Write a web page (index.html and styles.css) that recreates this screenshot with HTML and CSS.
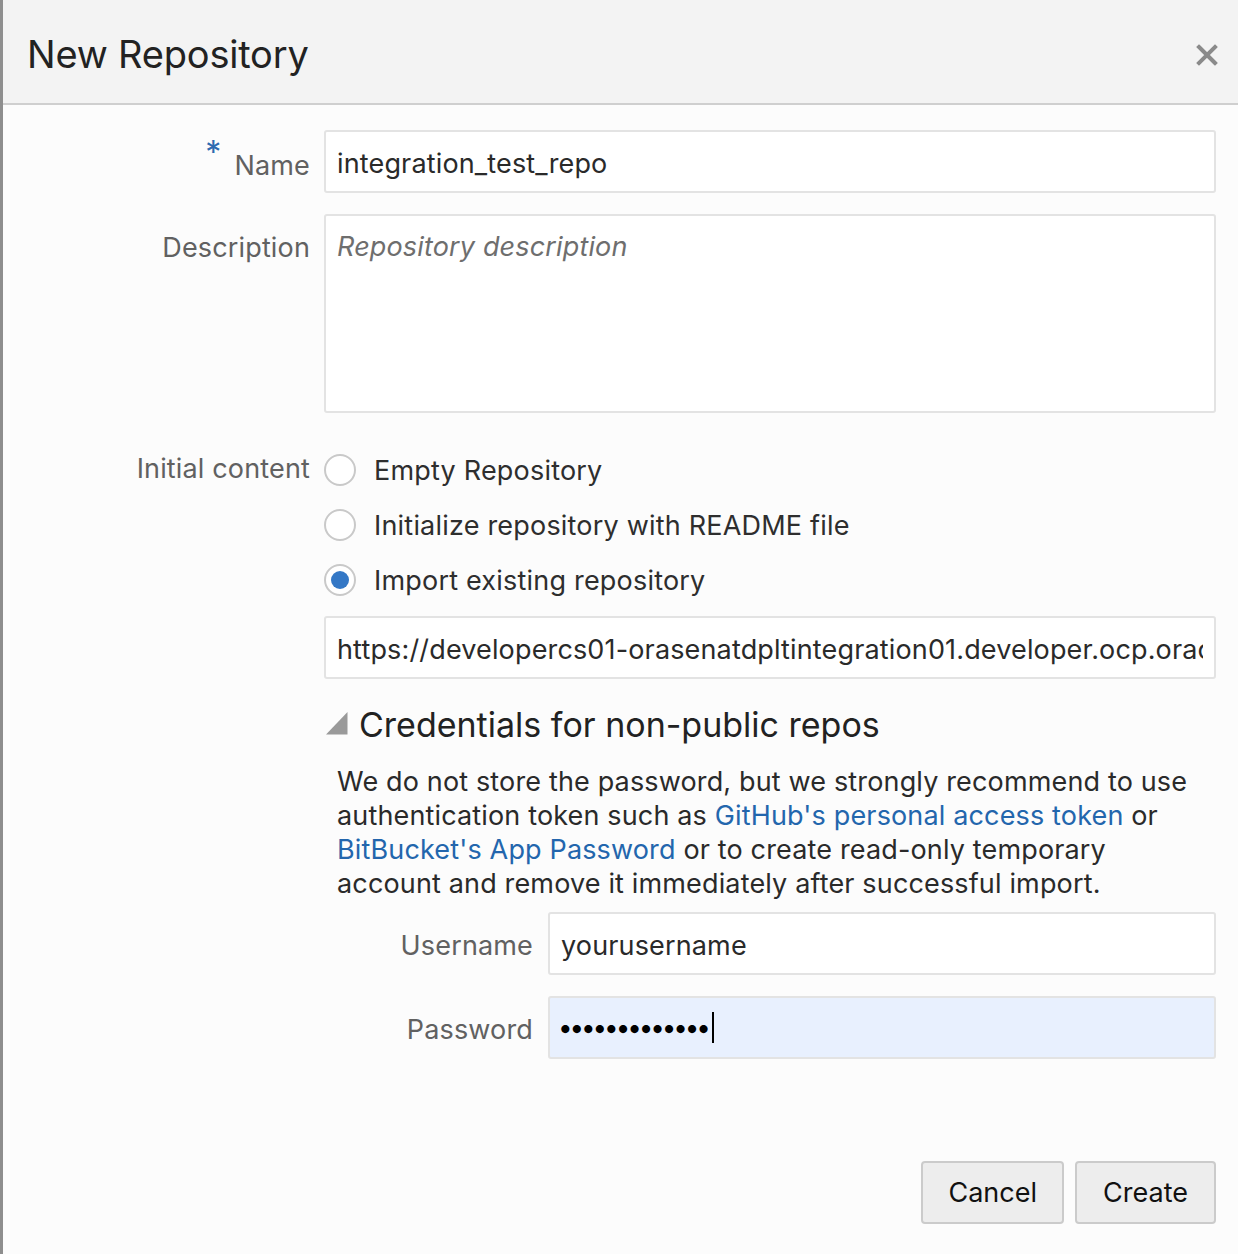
FILE: index.html
```html
<!DOCTYPE html>
<html>
<head>
<meta charset="utf-8">
<title>New Repository</title>
<link rel="stylesheet" href="styles.css">
</head>
<body>
<div class="dialog">
  <div class="header">
    <h1 class="title">New Repository</h1>
    <button class="close" aria-label="Close">
      <svg width="22" height="22" viewBox="0 0 22 22"><path d="M3 3L19 19M19 3L3 19" stroke="#8a8a8a" stroke-width="4" stroke-linecap="square"/></svg>
    </button>
  </div>
  <div class="body">
    <div class="form">
      <label class="label label-input"><span class="req">*</span>Name</label>
      <input class="field" type="text" value="integration_test_repo">

      <label class="label label-area">Description</label>
      <textarea class="field area" placeholder="Repository description"></textarea>

      <label class="label label-radio">Initial content</label>
      <div class="content">
        <div class="radios">
          <div class="radio-row"><span class="radio"></span><span class="radio-text">Empty Repository</span></div>
          <div class="radio-row"><span class="radio"></span><span class="radio-text">Initialize repository with README file</span></div>
          <div class="radio-row"><span class="radio checked"></span><span class="radio-text">Import existing repository</span></div>
        </div>
        <input class="field url" type="text" value="https://developercs01-orasenatdpltintegration01.developer.ocp.oraclecloud.com/">
        <div class="cred-head">
          <svg class="tri" width="22" height="23" viewBox="0 0 22 23"><path d="M0 22.5H21.5V0Z" fill="#9a9a9a"/></svg>
          <span>Credentials for non-public repos</span>
        </div>
        <p class="note">We do not store the password, but we strongly recommend to use authentication token such as <a href="#">GitHub's personal access token</a> or <a href="#">BitBucket's App Password</a> or to create read-only temporary account and remove it immediately after successful import.</p>
        <div class="cred-form">
          <label class="label label-input">Username</label>
          <input class="field" type="text" value="yourusername">
          <label class="label label-input">Password</label>
          <div class="field pwd"><span class="dots">•••••••••••••</span><span class="caret"></span></div>
        </div>
      </div>
    </div>
    <div class="footer">
      <button class="btn">Cancel</button>
      <button class="btn">Create</button>
    </div>
  </div>
</div>
</body>
</html>
```
FILE: styles.css
```css
html, body {
  margin: 0;
  padding: 0;
  background: #8e8e8e;
}
body {
  font-family: Inter, "Noto Sans", "Liberation Sans", sans-serif;
  width: 1238px;
  height: 1254px;
  overflow: hidden;
}
.dialog {
  margin-left: 3px;
  width: 1235px;
  height: 1254px;
  background: #fcfcfc;
  display: flex;
  flex-direction: column;
}
.header {
  height: 103px;
  background: #f3f3f3;
  border-bottom: 2px solid #cfcfcf;
  display: flex;
  align-items: center;
  justify-content: space-between;
  padding: 0 20px 0 24px;
  box-sizing: content-box;
}
.title {
  margin: 0;
  font-weight: 400;
  font-size: 38px;
  color: #222;
  letter-spacing: -0.2px;
  padding-top: 4px;
}
.close {
  border: 0;
  background: none;
  padding: 0;
  width: 22px;
  height: 22px;
  display: flex;
  margin-top: 6px;
}
.body {
  flex: 1;
  display: flex;
  flex-direction: column;
  padding: 25px 22px 30px 0;
}
.form {
  display: grid;
  grid-template-columns: 307px 1fr;
  column-gap: 14px;
  row-gap: 21px;
  align-items: start;
}
.label {
  text-align: right;
  color: #616161;
  font-size: 27px;
  letter-spacing: 0.15px;
  line-height: 63px;
  padding-top: 2px;
  height: 61px;
}
.label-area { line-height: 64px; height: auto; }
.label-radio { line-height: 30px; margin-top: 18px; height: auto; }
.req {
  color: #2d6bb0;
  font-size: 32px;
  position: relative;
  top: -11px;
  margin-right: 13px;
}
.field {
  box-sizing: border-box;
  width: 100%;
  height: 63px;
  border: 2px solid #e3e3e3;
  border-radius: 3px;
  background: #fff;
  font-family: inherit;
  font-size: 27px;
  letter-spacing: 0.15px;
  color: #2a2a2a;
  padding: 3px 11px 0;
  margin: 0;
  outline: none;
}
.area {
  height: 199px;
  resize: none;
  padding: 14px 11px;
  display: block;
}
.area::placeholder {
  color: #6e6e6e;
  font-style: italic;
}
.content {
  display: flex;
  flex-direction: column;
  margin-top: 8px;
}
.radios {
  display: flex;
  flex-direction: column;
}
.radio-row {
  height: 55px;
  display: flex;
  align-items: center;
}
.radio {
  box-sizing: border-box;
  width: 32px;
  height: 32px;
  border-radius: 50%;
  border: 2px solid #c9c9c9;
  background: #fff;
  margin-right: 18px;
  display: flex;
  align-items: center;
  justify-content: center;
}
.radio.checked::after {
  content: "";
  width: 18px;
  height: 18px;
  border-radius: 50%;
  background: #3478c6;
}
.radio-text {
  font-size: 27px;
  letter-spacing: 0.2px;
  color: #2e2e2e;
  padding-top: 2px;
}
.url {
  margin-top: 9px;
  white-space: nowrap;
  overflow: hidden;
}
.cred-head {
  display: flex;
  align-items: center;
  height: 40px;
  margin-top: 25px;
  font-size: 34px;
  color: #222;
}
.tri {
  margin: 0 11px 0 2px;
  position: relative;
  top: -1px;
}
.note {
  margin: 21px 0 0 0;
  padding-left: 13px;
  font-size: 27px;
  letter-spacing: 0.15px;
  line-height: 34px;
  color: #2a2a2a;
}
.note a {
  color: #2366ad;
  text-decoration: none;
}
.cred-form {
  display: grid;
  grid-template-columns: 209px 1fr;
  column-gap: 15px;
  row-gap: 21px;
  margin-top: 11px;
}
.pwd {
  background: #e8f0fe;
  display: flex;
  align-items: center;
  padding: 0 0 0 8px;
}
.dots {
  font-size: 26px;
  color: #000;
  letter-spacing: -3.1px;
}
.caret {
  width: 2px;
  height: 31px;
  background: #000;
  margin-left: 4px;
}
.footer {
  margin-top: auto;
  display: flex;
  justify-content: flex-end;
  gap: 11px;
}
.btn {
  box-sizing: border-box;
  height: 63px;
  border: 2px solid #cbcbcb;
  border-radius: 4px;
  background: #ededed;
  font-family: inherit;
  font-size: 27px;
  color: #111;
  padding: 0 25px;
  min-width: 141px;
}
```
